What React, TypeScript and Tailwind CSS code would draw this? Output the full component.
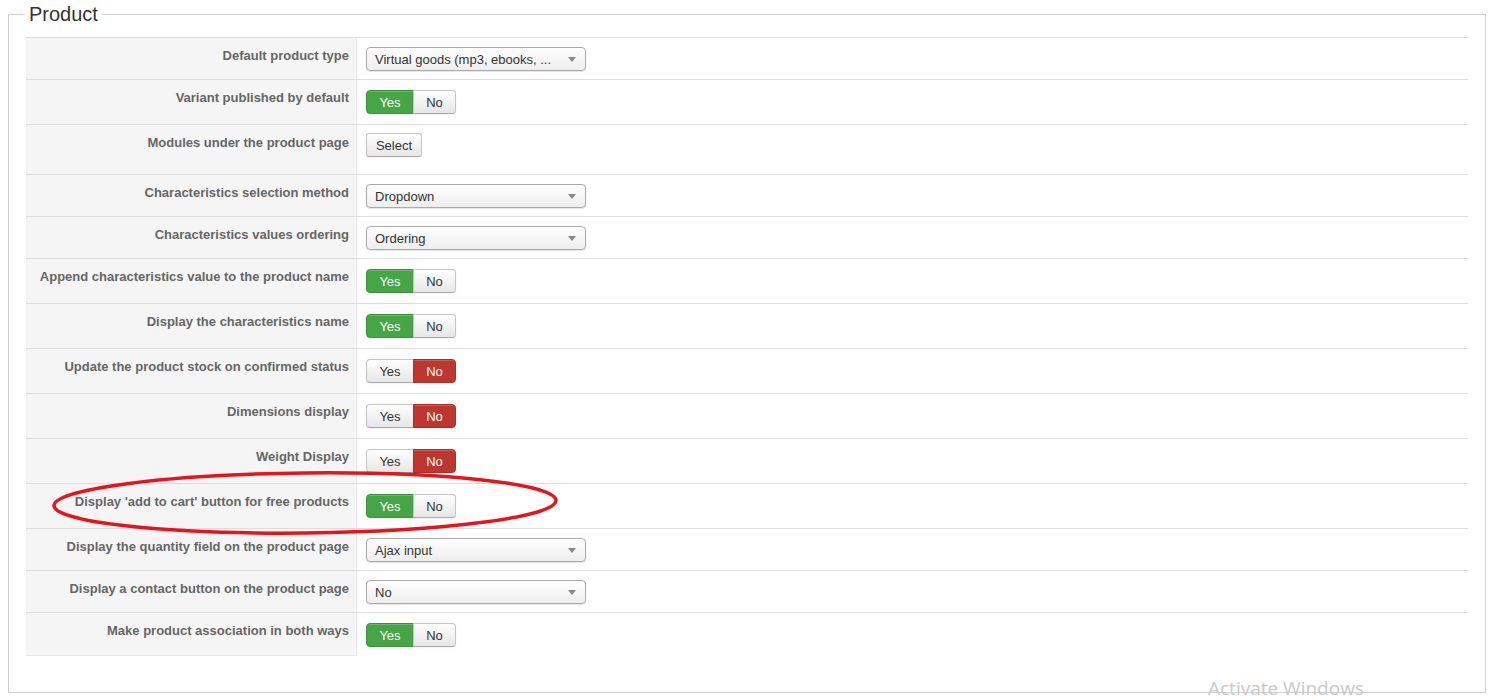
type Ctrl =
  | { kind: 'select'; value: string }
  | { kind: 'toggle'; on: boolean }
  | { kind: 'button'; text: string };

type Row = { label: string; h: string; pt: string; ctrl: Ctrl };

const rows: Row[] = [
  { label: 'Default product type', h: 'h-[42px]', pt: 'pt-[9px]', ctrl: { kind: 'select', value: 'Virtual goods (mp3, ebooks, ...' } },
  { label: 'Variant published by default', h: 'h-[45px]', pt: 'pt-[10px]', ctrl: { kind: 'toggle', on: true } },
  { label: 'Modules under the product page', h: 'h-[50px]', pt: 'pt-[8px]', ctrl: { kind: 'button', text: 'Select' } },
  { label: 'Characteristics selection method', h: 'h-[42px]', pt: 'pt-[9px]', ctrl: { kind: 'select', value: 'Dropdown' } },
  { label: 'Characteristics values ordering', h: 'h-[42px]', pt: 'pt-[9px]', ctrl: { kind: 'select', value: 'Ordering' } },
  { label: 'Append characteristics value to the product name', h: 'h-[45px]', pt: 'pt-[10px]', ctrl: { kind: 'toggle', on: true } },
  { label: 'Display the characteristics name', h: 'h-[45px]', pt: 'pt-[10px]', ctrl: { kind: 'toggle', on: true } },
  { label: 'Update the product stock on confirmed status', h: 'h-[45px]', pt: 'pt-[10px]', ctrl: { kind: 'toggle', on: false } },
  { label: 'Dimensions display', h: 'h-[45px]', pt: 'pt-[10px]', ctrl: { kind: 'toggle', on: false } },
  { label: 'Weight Display', h: 'h-[45px]', pt: 'pt-[10px]', ctrl: { kind: 'toggle', on: false } },
  { label: "Display 'add to cart' button for free products", h: 'h-[45px]', pt: 'pt-[10px]', ctrl: { kind: 'toggle', on: true } },
  { label: 'Display the quantity field on the product page', h: 'h-[42px]', pt: 'pt-[9px]', ctrl: { kind: 'select', value: 'Ajax input' } },
  { label: 'Display a contact button on the product page', h: 'h-[42px]', pt: 'pt-[9px]', ctrl: { kind: 'select', value: 'No' } },
  { label: 'Make product association in both ways', h: 'h-[44px]', pt: 'pt-[10px]', ctrl: { kind: 'toggle', on: true } },
];

const btnBase =
  'h-[24px] flex items-center justify-center text-[13px] leading-none border shadow-[inset_0_1px_0_rgba(255,255,255,0.2),0_1px_2px_rgba(0,0,0,0.05)]';
const btnDefault =
  'bg-gradient-to-b from-white to-[#e6e6e6] border-[#c5c5c5] border-b-[#a8a8a8] text-[#333]';

function FakeSelect({ value }: { value: string }) {
  return (
    <div className="w-[220px] h-[24px] flex items-center justify-between pl-[8px] pr-[9px] rounded-[4px] border border-[#aaa] bg-gradient-to-b from-white via-[#f6f6f6] to-[#eeeeee] shadow-[0_1px_1px_rgba(0,0,0,0.1)] text-[13px] text-[#333]">
      <span className="leading-none">{value}</span>
      <svg width="8" height="5" viewBox="0 0 8 5">
        <path d="M0 0h8L4 5z" fill="#888" />
      </svg>
    </div>
  );
}

function YesNo({ on }: { on: boolean }) {
  return (
    <div className="flex">
      <div
        className={`${btnBase} w-[48px] rounded-l-[4px] ${
          on ? 'bg-[#46a546] border-[#3e8f3e] text-white' : btnDefault
        }`}
      >
        Yes
      </div>
      <div
        className={`${btnBase} w-[43px] -ml-px rounded-r-[4px] ${
          on ? btnDefault : 'bg-[#bd362f] border-[#a9302a] text-white'
        }`}
      >
        No
      </div>
    </div>
  );
}

export default function App() {
  return (
    <div className="relative w-[1494px] h-[700px] bg-white overflow-hidden font-['Liberation_Sans',Arial,sans-serif]">
      <div className="relative mt-[14px] ml-[8px] w-[1478px] h-[679px] border border-[#cfcfcf] px-[17px] pt-[22px]">
        {/* legend sitting on the top border */}
        <div className="absolute -top-[12px] left-[16px] bg-white px-[4px] text-[20px] leading-[23px] text-[#333]">
          Product
        </div>

        <div className="flex flex-col">
          {rows.map((r, i) => (
            <div key={i} className={`flex border-t border-[#ddd] ${r.h}`}>
              <div
                className={`w-[331px] shrink-0 bg-[#f5f5f5] border-r border-[#e8e8e8] pr-[7px] pt-[9px] text-right text-[13px] leading-[18px] font-bold text-[#666] ${
                  i === rows.length - 1 ? 'border-b' : ''
                }`}
              >
                {r.label}
              </div>
              <div className={`flex-1 pl-[9px] ${r.pt}`}>
                {r.ctrl.kind === 'select' && <FakeSelect value={r.ctrl.value} />}
                {r.ctrl.kind === 'toggle' && <YesNo on={r.ctrl.on} />}
                {r.ctrl.kind === 'button' && (
                  <div className={`${btnBase} ${btnDefault} w-[56px] rounded-[3px] text-[12px]`}>
                    {r.ctrl.text}
                  </div>
                )}
              </div>
            </div>
          ))}
        </div>
      </div>

      {/* hand-drawn highlight around the free products option */}
      <svg className="absolute left-0 top-0 pointer-events-none" width="1494" height="700">
        <ellipse
          cx="305"
          cy="503"
          rx="251"
          ry="30"
          fill="none"
          stroke="#e8141c"
          strokeWidth="3.5"
          transform="rotate(-0.6 305 503)"
        />
      </svg>

      <div className="absolute left-[1208px] top-[675px] text-[19px] leading-[26px] text-[#c9c9c9] font-['Open_Sans',sans-serif]">
        Activate Windows
      </div>
    </div>
  );
}
